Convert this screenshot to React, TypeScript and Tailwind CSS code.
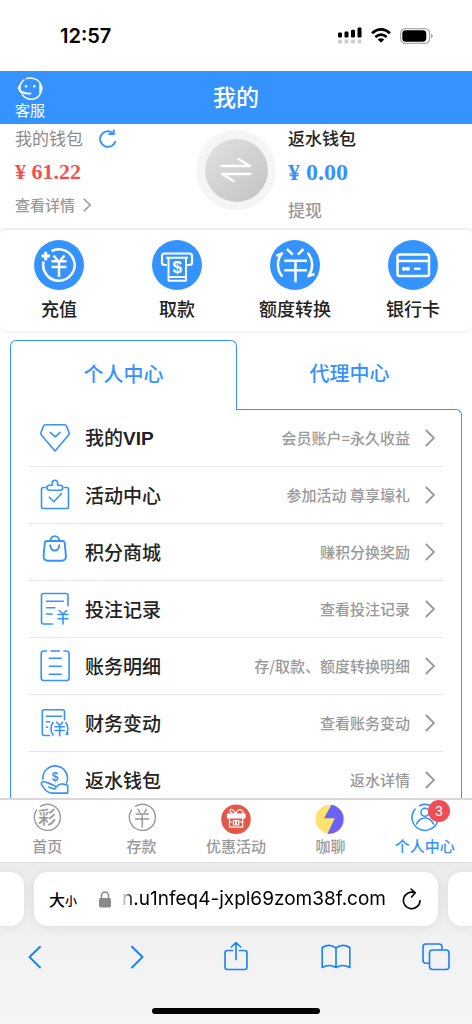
import type { ReactNode } from "react";

interface MenuItem {
  title: string;
  tag?: string;
  hint: string;
  icon: ReactNode;
}

interface NavItem {
  label: string;
  icon: ReactNode;
  active?: boolean;
  badge?: number;
}

interface IconProps {
  children: ReactNode;
  width?: number;
}

function LineIcon({ children, width = 1.6 }: IconProps) {
  return (
    <svg
      viewBox="0 0 30 30"
      className="size-[30px] shrink-0 overflow-visible"
      fill="none"
      stroke="currentColor"
      strokeWidth={width}
      strokeLinecap="round"
      strokeLinejoin="round"
      aria-hidden="true"
    >
      {children}
    </svg>
  );
}

function RoundIcon({ children, width = 2.5 }: IconProps) {
  return (
    <svg
      viewBox="0 0 50 50"
      className="size-[50px]"
      fill="none"
      stroke="#fff"
      strokeWidth={width}
      strokeLinejoin="round"
      aria-hidden="true"
    >
      <circle cx="25" cy="25" r="25" fill="#3593ff" stroke="none" />
      {children}
    </svg>
  );
}

const actions = [
  {
    label: "充值",
    icon: (
      <RoundIcon>
        <path d="M17.5 11.2A15.7 15.7 0 1 1 9.6 21.5" />
        <path d="M11.7 11.7v8.6M7.4 16H16" strokeWidth={3} />
        <path d="M19.5 15.5l4.2 5M30.5 15.5l-4.2 5M17.5 21.2h15M17.5 27h15M25 21v16" />
      </RoundIcon>
    ),
  },
  {
    label: "取款",
    icon: (
      <RoundIcon width={2.2}>
        <path d="M15 25h-2.5a2.5 2.5 0 0 1-2.5-2.5v-6.5a2.5 2.5 0 0 1 2.5-2.5h25a2.5 2.5 0 0 1 2.5 2.5v6.5a2.5 2.5 0 0 1-2.5 2.500H35" />
        <path d="M14 17.7h22M16.5 17.7v23h17.5v-23M16.5 37h17.5" strokeWidth={1.9} />
        <text x="25.2" y="33" textAnchor="middle" fontFamily="Liberation Sans" fontWeight="700" fontSize="17" fill="#fff" stroke="none">
          $
        </text>
      </RoundIcon>
    ),
  },
  {
    label: "额度转换",
    icon: (
      <RoundIcon>
        <path d="M6.2 15.8l5.8-2.5C6.5 20 6.5 30 12.5 36.7" />
        <path d="M37.7 12.8C43.5 20 43.5 29 38.5 36.2l6-2.2" />
        <path d="M17 9l5.7 5.7M33.5 9l-5.7 5.7M14.3 20.7h22.7M14.3 30.2h22.7M25.5 20.7v21.5" />
      </RoundIcon>
    ),
  },
  {
    label: "银行卡",
    icon: (
      <RoundIcon>
        <rect x="9.5" y="14.5" width="31.5" height="21.5" rx="2" />
        <path d="M10 21h31" />
        <path d="M16 28.8h.1M19.8 28.8h.1" strokeWidth={4.2} strokeLinecap="round" />
        <path d="M26 28.8h6.5" />
      </RoundIcon>
    ),
  },
];

const menu: MenuItem[] = [
  {
    title: "我的",
    tag: "VIP",
    hint: "会员账户=永久收益",
    icon: (
      <LineIcon>
        <path d="M5.5 1.7h19q1.4 0 1.9 1.2l2.6 6.6q.5 1.3-.4 2.4L15 28 1.4 11.9q-.9-1.1-.4-2.4L3.600 2.900q.5-1.2 1.9-1.2z" />
        <path d="M10.3 9.3l4.9 4.5 4.9-4.5" />
      </LineIcon>
    ),
  },
  {
    title: "活动中心",
    hint: "参加活动 尊享壕礼",
    icon: (
      <LineIcon>
        <path d="M5.3 7.5H3.2q-1.7 0-1.7 1.7v17.6q0 1.7 1.7 1.7h23.6q1.7 0 1.7-1.7V9.2q0-1.7-1.7-1.7h-2.1" />
        <path d="M9.5 5.2h2.7V3a2.6 2.6 0 0 1 5.4 0v2.2h2.7a2.5 2.5 0 0 1 0 5H9.5a2.5 2.5 0 0 1 0-5z" />
        <path d="M9.3 17.2l4.5 4.5 7.5-8" />
      </LineIcon>
    ),
  },
  {
    title: "积分商城",
    hint: "赚积分换奖励",
    icon: (
      <LineIcon width={1.9}>
        <path d="M7 4h15.5q2 0 2.2 2l1.2 12.5q.4 5.2-4.4 5.2H8q-4.8 0-4.4-5.2L4.8 6Q5 4 7 4z" />
        <path d="M10.3 4a4.5 4.9 0 0 1 9 0M10.300 8.300c.2 7 8.800 7 9 0" />
      </LineIcon>
    ),
  },
  {
    title: "投注记录",
    hint: "查看投注记录",
    icon: (
      <LineIcon>
        <path d="M12.5 30H3.500q-2 0-2-2V1.500q0-2 2-2H26q2 0 2 2v10.300" />
        <path d="M6.5 7.2h16.8M6.5 13.8h8.3M6.5 20h5.6" />
        <path d="M19.3 16.5l3.7 3.5 3.7-3.5M18 20.5h10M18 24.8h10M23 20v10" />
      </LineIcon>
    ),
  },
  {
    title: "账务明细",
    hint: "存/取款、额度转换明细",
    icon: (
      <LineIcon>
        <path d="M6.5 0H3.700Q1.200.2 1.200 2.700v24.300q0 2.500 2.500 2.500h22.900q2.500 0 2.500-2.500V2.700Q29.100.2 26.600 0h-2.800M11 0h8.500" />
        <path d="M9.3 7.3h12M9.3 15.3h12M9.3 23.3h12" />
      </LineIcon>
    ),
  },
  {
    title: "财务变动",
    hint: "查看账务变动",
    icon: (
      <LineIcon>
        <path d="M9.5 27.5H4.300q-2 0-2-2V3.800q0-2 2-2h18.200q2 0 2 2v8" />
        <path d="M6.5 8.3h15M6.5 13.8h3.2M6.5 19.2h1" />
        <path d="M13 14.5q-4 6 0 12.5M26 14.5q3.5 6 .3 12l1.7-.5" />
        <path d="M16.8 14.2l1.7 2M22.5 14.2l-1.7 2M15 18.7h9.3M15 22.5h9.3M19.7 17v10.8" />
      </LineIcon>
    ),
  },
  {
    title: "返水钱包",
    hint: "返水详情",
    icon: (
      <LineIcon>
        <path d="M2.9 14.3A12.3 12.3 0 1 1 26.500 18" />
        <path d="M11.5 19.5L7.500 17.700Q3.500 15.800 1.700 17.500q-1 1 1 3.800 4.200 6.800 10 6.800h15v-7.800l-4.400-1.200q-2.800-.6-4.800 1l-1.500 1.200" />
        <path d="M8.5 18l5.500 2.500q3 1.500 1.500 3-1 .8-3.500-.2l-3.200-1.200" />
        <text x="15" y="15.5" textAnchor="middle" fontFamily="Liberation Sans" fontWeight="700" fontSize="12" fill="currentColor" stroke="none">
          $
        </text>
      </LineIcon>
    ),
  },
];

const navItems: NavItem[] = [
  {
    label: "首页",
    icon: (
      <LineIcon width={1.4}>
        <path d="M8.5 2.3A13 13 0 1 1 4.5 6.2" />
        <text x="15" y="20" textAnchor="middle" fontFamily="Noto Sans CJK SC" fontSize="18" fill="currentColor" stroke="none">
          彩
        </text>
      </LineIcon>
    ),
  },
  {
    label: "存款",
    icon: (
      <LineIcon width={1.4}>
        <path d="M8.5 2.3A13 13 0 1 1 4.5 6.2" />
        <path d="M11 5.3l2 3M19.5 5.3l-2 3M9.2 10h12M8.5 15h13.2M15.2 10v13" />
      </LineIcon>
    ),
  },
  {
    label: "优惠活动",
    icon: (
      <LineIcon width={1.2}>
        <circle cx="15" cy="15.3" r="14.8" fill="#e2574a" stroke="none" />
        <g stroke="#fff">
          <path d="M13.5 10q-5-1-4.500-3.700 1.200-2.300 3.800.5l2.200 3q1-4.300 3.700-4.300 3.300.5 3.500 4.500" />
          <rect x="6.5" y="10.2" width="17.5" height="3.6" fill="#fff" />
          <path d="M8.5 14v9.2h13.2V14M8.5 18h2.5M19 18h2.5" />
          <path d="M12.5 16.5h5.3v4.5h-5.3z" />
          <path d="M15 17.800v2" strokeWidth={2} />
        </g>
      </LineIcon>
    ),
  },
  {
    label: "咖聊",
    icon: (
      <LineIcon>
        <g stroke="none">
          <circle cx="15" cy="15.3" r="14.6" fill="#fde26c" />
          <path d="M16.5.8A14.6 14.6 0 0 1 12.5 29.7L19.7 14.3H9z" fill="#6b62f8" />
        </g>
      </LineIcon>
    ),
  },
  {
    label: "个人中心",
    active: true,
    badge: 3,
    icon: (
      <LineIcon width={1.6}>
        <path d="M9.5 1.7A13 13 0 1 1 5 5.2" />
        <circle cx="15" cy="8.3" r="4" />
        <path d="M6.5 20q3-6 8.5-6t8.5 6" />
      </LineIcon>
    ),
  },
];

function Chevron({ small }: { small?: boolean }) {
  return (
    <svg
      viewBox="0 0 10 18"
      className={small ? "h-[14px] w-2 overflow-visible" : "h-[18px] w-[10px] shrink-0"}
      fill="none"
      stroke="#999"
      strokeWidth={small ? 2 : 1.8}
      aria-hidden="true"
    >
      <path d="M.8 1l8.2 8-8.2 8" />
    </svg>
  );
}

function StatusBar() {
  return (
    <div className="flex h-[71px] shrink-0 items-center justify-between pr-[39px] pl-[60px]">
      <span className="font-['Inter'] text-[20px] font-semibold text-black">12:57</span>
      <div className="flex items-center gap-[9px]">
        <svg viewBox="0 0 24 17" className="h-[17px] w-6" aria-hidden="true">
          <g fill="#000">
            <rect x="0" y="5.5" width="4" height="5" rx="1.2" />
            <rect x="6.5" y="4.5" width="4" height="6" rx="1.2" />
            <rect x="13" y="2.7" width="4" height="7.8" rx="1.2" />
            <rect x="19.5" y=".5" width="4" height="10" rx="1.2" />
          </g>
          <g fill="#ccc">
            <rect x="0" y="12.5" width="4" height="4" rx="1.2" />
            <rect x="6.5" y="12.5" width="4" height="4" rx="1.2" />
            <rect x="13" y="12.5" width="4" height="4" rx="1.2" />
            <rect x="19.5" y="12.5" width="4" height="4" rx="1.2" />
          </g>
        </svg>
        <svg viewBox="0 0 20 15" className="h-[15px] w-5" fill="none" stroke="#000" strokeWidth={2.6} aria-hidden="true">
          <path d="M1 5.2q9-7.6 18 0M4.3 8.9q5.7-4.7 11.4 0" />
          <path d="M10 14.8L6.7 11.5q3.3-2.4 6.6 0z" fill="#000" stroke="none" />
        </svg>
        <svg viewBox="0 0 33 16" className="h-4 w-[33px]" aria-hidden="true">
          <rect x=".6" y=".6" width="29" height="14.8" rx="4.8" fill="none" stroke="#aaa" strokeWidth={1.2} />
          <rect x="2.3" y="2.3" width="24" height="11.4" rx="3.4" />
          <path d="M31 5.5q1.8 1 1.8 2.5T31 10.5z" fill="#aaa" />
        </svg>
      </div>
    </div>
  );
}

function Header() {
  return (
    <header className="grid h-[53px] shrink-0 grid-cols-[1fr_auto_1fr] items-center bg-[#3593ff] text-white">
      <button type="button" className="ml-[15px] flex flex-col items-center justify-self-start text-[15px] leading-5">
        <svg viewBox="0 0 26 24" className="h-6 w-[26px]" fill="none" stroke="#fff" strokeWidth={1.5} strokeLinecap="round" aria-hidden="true">
          <path d="M9.5 2.5Q13 1.3 17 2.600a10.500 10.500 0 1 1-12 15.200M3.300 9Q4.500 5.500 7 3.800" />
          <path d="M3 9.3L1.3 12 3 15zM23 9.3l1.7 2.7L23 15z" fill="#fff" />
          <path d="M3 14.5q3.5 3.5 10.5 3" strokeWidth={1.8} />
          <path d="M9 10.2h.1M17.2 10.2h.1" strokeWidth={2.6} />
        </svg>
        客服
      </button>
      <h1 className="pb-0.5 text-[23px] font-medium">我的</h1>
    </header>
  );
}

function Wallets() {
  return (
    <section className="grid shrink-0 grid-cols-[1fr_80px_1fr] pb-1.5">
      <div className="pl-[15px]">
        <div className="flex h-7 items-center gap-4 text-[17px] text-[#8c8c8c]">
          我的钱包
          <button type="button" aria-label="刷新">
            <svg viewBox="0 0 18 19" className="h-[19px] w-[18px]" fill="none" stroke="#3593ff" strokeWidth={1.9} aria-hidden="true">
              <path d="M16.5 12A7.8 7.8 0 1 1 13.5 3.7M9.5 5h5.300V.5" />
            </svg>
          </button>
        </div>
        <div className="mt-1.5 h-7 font-['Liberation_Serif',serif] text-[22px] leading-7 font-bold text-[#f05050]">¥ 61.22</div>
        <a href="#details" className="mt-2 flex h-[22px] items-center gap-2 text-[15px] font-medium text-[#999]">
          查看详情
          <Chevron small />
        </a>
      </div>
      <button
        type="button"
        aria-label="互转"
        className="mt-1.5 flex size-20 items-center justify-center rounded-full bg-[#f5f5f5]"
      >
        <span className="flex size-[63px] items-center justify-center rounded-full bg-linear-to-br from-[#e2e2e2] to-[#c2c2c2]">
          <svg viewBox="0 0 32 26" className="h-[26px] w-8" fill="none" stroke="#fff" strokeWidth={2.4} strokeLinecap="round" strokeLinejoin="round" aria-hidden="true">
            <path d="M1.5 9h28.5L18.5 2M30.5 17H2l11.5 7" />
          </svg>
        </span>
      </button>
      <div className="pl-3">
        <div className="h-7 text-[17px] leading-7 font-medium text-[#222]">返水钱包</div>
        <div className="mt-1.5 h-7 font-['Liberation_Serif',serif] text-[24px] leading-7 font-bold text-[#3593ff]">¥ 0.00</div>
        <a href="#withdraw" className="mt-3 block h-6 text-[17px] leading-6 font-medium text-[#999]">
          提现
        </a>
      </div>
    </section>
  );
}

function Actions() {
  return (
    <section className="grid shrink-0 grid-cols-4 rounded-md border-t-2 border-[#eee] pt-[10px] pb-[11px] shadow-[0_1px_3px_rgba(0,0,0,0.08)]">
      {actions.map((a) => (
        <button key={a.label} type="button" className="flex flex-col items-center gap-1.5 text-[18px] leading-6 font-medium text-[#222]">
          {a.icon}
          {a.label}
        </button>
      ))}
    </section>
  );
}

function Center() {
  return (
    <main className="mx-[10px] mt-[9px] flex min-h-0 flex-1 flex-col overflow-hidden">
      <div className="flex shrink-0 text-[20px] font-medium text-[#3593ff]">
        <button type="button" className="z-10 h-[70px] flex-1 rounded-t-md border border-b-0 border-[#3593ff] bg-white pb-1">
          个人中心
        </button>
        <button type="button" className="h-[70px] flex-1 pb-1">代理中心</button>
      </div>
      <ul className="-mt-px min-h-0 flex-1 overflow-hidden rounded-tr-md border border-b-0 border-[#3593ff] px-[18px]">
        {menu.map((item) => (
          <li key={item.title} className="border-b border-[#e4e4e4]">
            <a href="#menu" className="flex h-14 items-center gap-[15px] pr-2 pl-[11px]">
              <span className="text-[#3593ff]">{item.icon}</span>
              <span className="flex-1 text-[19px] font-medium text-[#222]">
                {item.title}
                {item.tag && <span className="font-['Liberation_Sans',sans-serif] font-bold">{item.tag}</span>}
              </span>
              <span className="text-[15px] font-medium text-[#999]">{item.hint}</span>
              <Chevron />
            </a>
          </li>
        ))}
      </ul>
    </main>
  );
}

function BottomNav() {
  return (
    <nav className="grid shrink-0 grid-cols-5 border-t-2 border-[#d9d9d9] pt-1 pb-1.5">
      {navItems.map((item) => (
        <a
          key={item.label}
          href="#nav"
          className={`flex flex-col items-center gap-0.5 text-[15px] leading-5 font-medium ${item.active ? "text-[#3593ff]" : "text-[#999]"}`}
        >
          <span className="relative">
            {item.icon}
            {item.badge && (
              <span className="absolute -top-1 left-[18px] flex size-[22px] items-center justify-center rounded-full bg-[#ee4d55] font-['Liberation_Sans'] text-[14px] font-normal text-white">
                {item.badge}
              </span>
            )}
          </span>
          {item.label}
        </a>
      ))}
    </nav>
  );
}

function BrowserBar() {
  return (
    <footer className="shrink-0 border-t border-[#dcdcdc] bg-linear-to-b from-[#ececec] via-[#f2f2f2] to-[#f5f5f5] pt-[9px] pb-[10px]">
      <div className="flex h-[54px] gap-[10px]">
        <div className="w-6 rounded-r-[14px] bg-white shadow-[0_2px_12px_rgba(0,0,0,0.08)]" />
        <div className="flex min-w-0 flex-1 items-center rounded-[14px] bg-white pr-4 pl-[15px] text-black shadow-[0_2px_12px_rgba(0,0,0,0.08)]">
          <button type="button" className="shrink-0 font-medium">
            <span className="text-[16px]">大</span>
            <span className="text-[12px]">小</span>
          </button>
          <svg viewBox="0 0 12 17" className="ml-[22px] h-[17px] w-3 shrink-0" aria-hidden="true">
            <rect x="0" y="7" width="12" height="9.5" rx="1.8" fill="#8a8a8a" />
            <path d="M2.5 7.5V4.7a3.5 3.7 0 0 1 7 0v2.8" fill="none" stroke="#8a8a8a" strokeWidth={1.5} />
          </svg>
          <button
            type="button"
            className="ml-1.5 flex flex-1 justify-end mask-[linear-gradient(to_right,transparent_4px,black_16px)] font-['Inter'] text-[19px] whitespace-nowrap"
          >
            n.u1nfeq4-jxpl69zom38f.com
          </button>
          <button type="button" aria-label="重新载入" className="ml-4 shrink-0">
            <svg viewBox="0 0 20 22" className="h-[22px] w-5" fill="none" stroke="#000" strokeWidth={1.6} strokeLinecap="round" strokeLinejoin="round" aria-hidden="true">
              <path d="M18 12.5A8.3 8.3 0 1 1 13 4.8M9 1l4.3 3.8L9.5 9" />
            </svg>
          </button>
        </div>
        <div className="w-6 rounded-l-[14px] bg-white shadow-[0_2px_12px_rgba(0,0,0,0.08)]" />
      </div>
      <div className="mt-4 flex justify-between px-[21px] text-[#1480ff]">
        <button type="button" aria-label="后退">
          <LineIcon width={1.9}>
            <path d="M19 4.7L8.5 15 19 25.5" />
          </LineIcon>
        </button>
        <button type="button" aria-label="前进">
          <LineIcon width={1.9}>
            <path d="M11 4.7L21.5 15 11 25.5" />
          </LineIcon>
        </button>
        <button type="button" aria-label="分享">
          <LineIcon>
            <path d="M11.5 8.5H6.5q-2.5 0-2.5 2.5v14q0 2.5 2.500 2.500h17q2.500 0 2.500-2.500V11q0-2.500-2.500-2.500h-5M15 17.500V.5M10.300 5L15 .5 19.700 5" />
          </LineIcon>
        </button>
        <button type="button" aria-label="书签">
          <LineIcon>
            <path d="M15 6Q8.500 1 1.200 5.500v20q7-4 13.800 0 6.800-4 13.800 0v-20Q21.500 1 15 6v19.500" />
          </LineIcon>
        </button>
        <button type="button" aria-label="标签页">
          <LineIcon>
            <path d="M8 21.300H5q-3 0-3-3V5q0-3 3-3h13q3 0 3 3v2.500" />
            <rect x="8.5" y="8" width="19.5" height="19.5" rx="3" />
          </LineIcon>
        </button>
      </div>
      <div className="mx-auto mt-9 h-1.5 w-[168px] rounded-full bg-black" />
    </footer>
  );
}

export default function App() {
  return (
    <div className="flex h-screen flex-col overflow-hidden bg-white font-['Noto_Sans_CJK_SC',sans-serif]">
      <StatusBar />
      <Header />
      <Wallets />
      <Actions />
      <Center />
      <BottomNav />
      <BrowserBar />
    </div>
  );
}
